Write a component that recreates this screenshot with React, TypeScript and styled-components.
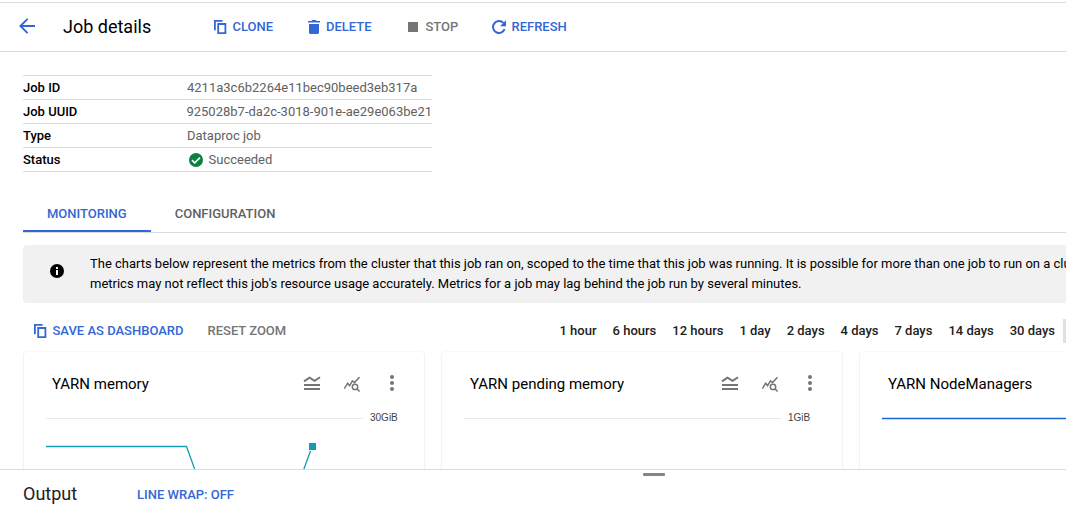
import React from "react";
import styled, { createGlobalStyle } from "styled-components";

const GlobalStyle = createGlobalStyle`
  *, *::before, *::after { box-sizing: border-box; }
  html, body { margin: 0; padding: 0; background: #fff; overflow: hidden; }
  body { font-family: Roboto, "Liberation Sans", sans-serif; font-size: 13px; color: #000; }
  svg { display: block; flex: none; }
`;

const BLUE = "#3367d6";
const GREY = "#757575";

const Page = styled.div`
  display: flex;
  flex-direction: column;
  width: 100%;
  height: 510px;
  padding-top: 2px;
  overflow: hidden;
`;

const Header = styled.header`
  display: flex;
  align-items: center;
  flex: none;
  height: 50px;
  padding-left: 19px;
  border-top: 1px solid #dadce0;
  border-bottom: 1px solid #dadce0;
`;

const BackButton = styled.button`
  display: flex;
  width: 44px;
  margin-top: -2px;
  padding: 0;
  border: 0;
  background: none;
`;

const Title = styled.h1<{ $width: number }>`
  width: ${(p) => p.$width}px;
  margin: 0;
  font-size: 18px;
  font-weight: 400;
  line-height: 24px;
  white-space: nowrap;
`;

const Action = styled.button<{ $muted?: boolean; $gap?: number; $width?: number }>`
  display: flex;
  align-items: center;
  flex: none;
  gap: ${(p) => p.$gap ?? 6}px;
  width: ${(p) => (p.$width ? `${p.$width}px` : "auto")};
  padding: 0;
  border: 0;
  background: none;
  color: ${(p) => (p.$muted ? GREY : BLUE)};
  font: 500 13px/20px Roboto, "Liberation Sans", sans-serif;
  white-space: nowrap;
`;

const Main = styled.main`
  flex: none;
  height: 417px;
  padding: 23px 0 0 23px;
  overflow: hidden;
`;

const Details = styled.dl`
  width: 409px;
  margin: 0;
  border-bottom: 1px solid #dadce0;
`;

const DetailRow = styled.div`
  display: flex;
  align-items: center;
  height: 24px;
  border-top: 1px solid #dadce0;
`;

const DetailName = styled.dt`
  width: 164px;
  font-weight: 500;
`;

const DetailValue = styled.dd`
  display: flex;
  align-items: center;
  gap: 3.5px;
  margin: 0;
  color: #616161;
  white-space: nowrap;
`;

const Tabs = styled.nav`
  display: flex;
  height: 38px;
  margin-top: 23px;
  border-bottom: 1px solid #dadce0;
`;

const Tab = styled.a<{ $active?: boolean }>`
  height: 37px;
  padding: 9px 24px 0;
  border-bottom: 2px solid ${(p) => (p.$active ? BLUE : "transparent")};
  color: ${(p) => (p.$active ? BLUE : "#5f5f5f")};
  font-weight: 500;
  line-height: 20px;
`;

const Notice = styled.section`
  display: flex;
  align-items: flex-start;
  width: 1200px;
  height: 58px;
  margin-top: 12px;
  padding: 9px 0 0 27px;
  gap: 26px;
  border-radius: 4px;
  background: #f1f1f1;
`;

const NoticeIcon = styled.span`
  margin-top: 10px;
`;

const NoticeText = styled.p`
  margin: 0;
  line-height: 20px;
  white-space: nowrap;
`;

const Line = styled.span<{ $spacing: number }>`
  display: block;
  letter-spacing: ${(p) => p.$spacing}px;
`;

const ChartToolbar = styled.div`
  display: flex;
  align-items: center;
  height: 24px;
  margin-top: 16px;
  padding-left: 11px;
`;

const Ranges = styled.div`
  display: flex;
  align-items: flex-start;
  gap: 16px;
  width: 506.5px;
  margin-left: auto;
  color: #212121;
  font-weight: 500;
  line-height: 22px;
  white-space: nowrap;
  overflow: hidden;
`;

const Range = styled.span`
  flex: none;
  padding-top: 1px;
`;

const SelectedRange = styled.span`
  flex: none;
  width: 60px;
  height: 24px;
  margin-left: -8px;
  background: #e0e0e0;
`;

const Cards = styled.div`
  display: flex;
  gap: 18px;
  margin: 9px 0 0 1px;
`;

const Card = styled.article`
  flex: none;
  width: 400px;
  height: 260px;
  border-radius: 3px;
  box-shadow: 0 0 2px rgba(0, 0, 0, 0.1), 0 1px 2px rgba(0, 0, 0, 0.1);
`;

const CardHead = styled.div`
  display: flex;
  align-items: center;
  height: 64px;
  padding: 0 20px 0 28px;
`;

const CardTitle = styled.h2`
  flex: 1;
  margin: 0;
  font-size: 15px;
  font-weight: 400;
  line-height: 20px;
`;

const CardIcons = styled.div`
  display: flex;
  align-items: center;
  gap: 16px;
`;

const Plot = styled.div`
  display: flex;
  gap: 7px;
  padding-left: 22px;
`;

const AxisLabel = styled.span`
  margin-top: -5px;
  color: #424242;
  font-family: "Liberation Sans", sans-serif;
  font-size: 10px;
  line-height: 14px;
`;

const OutputBar = styled.footer`
  display: flex;
  flex-direction: column;
  flex: none;
  height: 41px;
  border-top: 1px solid #dadce0;
`;

const Grip = styled.div`
  flex: none;
  width: 22px;
  height: 3px;
  margin: 3px 0 0 643px;
  border-radius: 1px;
  background: #80868b;
`;

const OutputRow = styled.div`
  display: flex;
  align-items: flex-start;
  flex: none;
  height: 24px;
  margin-top: 6px;
  padding-left: 23px;
  color: #212121;
`;

const OutputAction = styled(Action)`
  margin-top: 3px;
`;

const BackIcon = () => (
  <svg width="17" height="16" viewBox="0 0 17 16" fill="none" stroke={BLUE} strokeWidth="1.9">
    <path d="M16 8H1.6M8.6 0.9L1.4 8L8.6 15.1" />
  </svg>
);

const CopyIcon = () => (
  <svg width="13" height="15" viewBox="0 0 13 15" fill="none" stroke={BLUE} strokeWidth="1.8">
    <path d="M0.9 10.2V0.9H8.6" />
    <path d="M4.2 4H11.4V13.1H4.2Z" />
  </svg>
);

const TrashIcon = () => (
  <svg width="12" height="14" viewBox="0 0 12 14" fill={BLUE}>
    <path d="M0 1H3.4L4.2 0H7.8L8.6 1H12V2.6H0ZM1 4H11V12.4Q11 14 9.4 14H2.6Q1 14 1 12.4Z" />
  </svg>
);

const StopIcon = () => (
  <svg width="10" height="10" viewBox="0 0 10 10" fill={GREY}>
    <path d="M0 0H10V10H0Z" />
  </svg>
);

const RefreshIcon = () => (
  <svg width="14" height="14" viewBox="0 0 14 14">
    <path d="M12.6 9.2A6 6 0 1 1 11.4 2.9" fill="none" stroke={BLUE} strokeWidth="2" />
    <path d="M14 0.2V6.2H8Z" fill={BLUE} />
  </svg>
);

const SuccessIcon = () => (
  <svg width="18" height="14" viewBox="0 0 18 14">
    <circle cx="9" cy="7" r="7" fill="#0b8043" />
    <path d="M4.9 7.1L7.7 9.8L13 4.6" fill="none" stroke="#fff" strokeWidth="1.6" />
  </svg>
);

const InfoIcon = () => (
  <svg width="14" height="14" viewBox="0 0 14 14">
    <circle cx="7" cy="7" r="7" />
    <path d="M6 3H8V5H6ZM6 6H8V11H6Z" fill="#fff" />
  </svg>
);

const LegendIcon = () => (
  <svg width="24" height="24" viewBox="0 0 24 24" fill="none" stroke={GREY}>
    <path d="M4 13H20M4 17H20" strokeWidth="2" />
    <path d="M4 9.4L9.5 5.6L14.6 8.9L20 5.2" strokeWidth="1.9" />
  </svg>
);

const ExploreIcon = () => (
  <svg width="24" height="24" viewBox="0 0 24 24" fill="none" stroke={GREY} strokeWidth="1.5">
    <path d="M4.4 16.6L7.6 11.2L9.6 13.6L12.4 8.8L14.4 10.6L19.5 5.2" />
    <circle cx="15" cy="14.9" r="2.7" />
    <path d="M17 16.9L19.6 19.5" />
  </svg>
);

const MoreIcon = () => (
  <svg width="24" height="24" viewBox="0 0 24 24" fill={GREY}>
    <circle cx="12" cy="5" r="2" />
    <circle cx="12" cy="11" r="2" />
    <circle cx="12" cy="17" r="2" />
  </svg>
);

const MemoryPlot = () => (
  <svg width="317" height="150" viewBox="0 0 317 150" fill="none">
    <path d="M0 2.5H317" stroke="#e8eaed" />
    <path d="M0 30.5H140.5L180 140H226L264.5 35" stroke="#129eaf" strokeWidth="1.3" />
    <path d="M263 27H270V34H263Z" fill="#129eaf" />
  </svg>
);

const GridPlot = ({ color = "#e8eaed", width = 1 }: { color?: string; width?: number }) => (
  <svg width="317" height="150" viewBox="0 0 317 150" fill="none">
    <path d="M0 2.5H317" stroke={color} strokeWidth={width} />
  </svg>
);

const ChartCard = ({ title, label, children }: { title: string; label?: string; children: React.ReactNode }) => (
  <Card>
    <CardHead>
      <CardTitle>{title}</CardTitle>
      <CardIcons>
        <LegendIcon />
        <ExploreIcon />
        <MoreIcon />
      </CardIcons>
    </CardHead>
    <Plot>
      {children}
      {label && <AxisLabel>{label}</AxisLabel>}
    </Plot>
  </Card>
);

const ranges = ["1 hour", "6 hours", "12 hours", "1 day", "2 days", "4 days", "7 days", "14 days", "30 days"];

export default function App() {
  return (
    <Page>
      <GlobalStyle />
      <Header>
        <BackButton aria-label="Back"><BackIcon /></BackButton>
        <Title $width={151}>Job details</Title>
        <Action $width={94} $gap={5.5}><CopyIcon />CLONE</Action>
        <Action $width={100}><TrashIcon />DELETE</Action>
        <Action $muted $width={84} $gap={7.5}><StopIcon />STOP</Action>
        <Action $gap={5.5}><RefreshIcon />REFRESH</Action>
      </Header>
      <Main>
        <Details>
          <DetailRow>
            <DetailName>Job ID</DetailName>
            <DetailValue>4211a3c6b2264e11bec90beed3eb317a</DetailValue>
          </DetailRow>
          <DetailRow>
            <DetailName>Job UUID</DetailName>
            <DetailValue>925028b7-da2c-3018-901e-ae29e063be21</DetailValue>
          </DetailRow>
          <DetailRow>
            <DetailName>Type</DetailName>
            <DetailValue>Dataproc job</DetailValue>
          </DetailRow>
          <DetailRow>
            <DetailName>Status</DetailName>
            <DetailValue><SuccessIcon />Succeeded</DetailValue>
          </DetailRow>
        </Details>
        <Tabs>
          <Tab $active>MONITORING</Tab>
          <Tab>CONFIGURATION</Tab>
        </Tabs>
        <Notice>
          <NoticeIcon><InfoIcon /></NoticeIcon>
          <NoticeText>
            <Line $spacing={-0.01}>
              The charts below represent the metrics from the cluster that this job ran on, scoped to the time that this job was running. It is possible for more than one job to run on a cluster
            </Line>
            <Line $spacing={-0.005}>
              metrics may not reflect this job's resource usage accurately. Metrics for a job may lag behind the job run by several minutes.
            </Line>
          </NoticeText>
        </Notice>
        <ChartToolbar>
          <Action $width={173.5} $gap={5.5}><CopyIcon />SAVE AS DASHBOARD</Action>
          <Action $muted>RESET ZOOM</Action>
          <Ranges>
            {ranges.map((r) => <Range key={r}>{r}</Range>)}
            <SelectedRange />
          </Ranges>
        </ChartToolbar>
        <Cards>
          <ChartCard title="YARN memory" label="30GiB"><MemoryPlot /></ChartCard>
          <ChartCard title="YARN pending memory" label="1GiB"><GridPlot /></ChartCard>
          <ChartCard title="YARN NodeManagers"><GridPlot color="#1967d2" width={1.4} /></ChartCard>
        </Cards>
      </Main>
      <OutputBar>
        <Grip />
        <OutputRow>
          <Title as="h2" $width={114}>Output</Title>
          <OutputAction>LINE WRAP: OFF</OutputAction>
        </OutputRow>
      </OutputBar>
    </Page>
  );
}
